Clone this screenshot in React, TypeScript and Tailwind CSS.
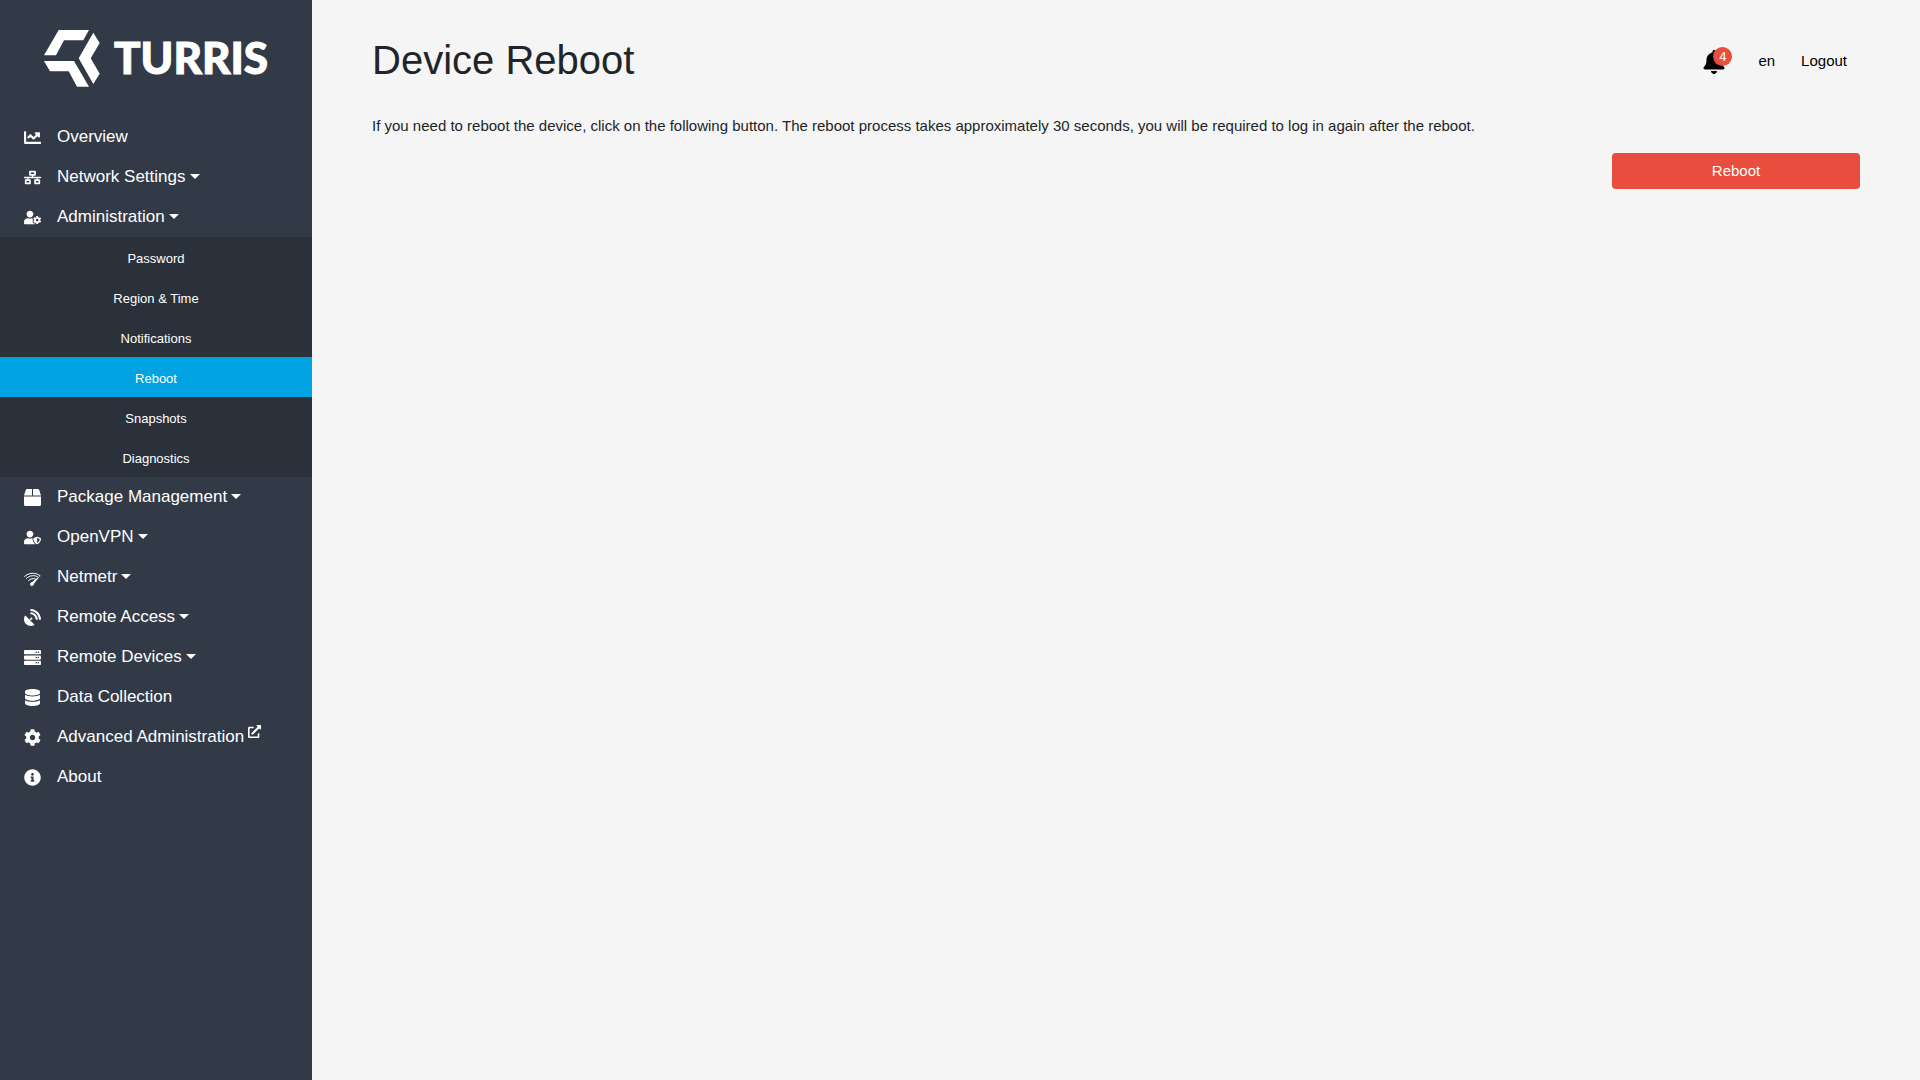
import type { ReactNode } from "react";
import {
  FaBell,
  FaBox,
  FaChartLine,
  FaCog,
  FaDatabase,
  FaExternalLinkAlt,
  FaInfoCircle,
  FaNetworkWired,
  FaSatelliteDish,
  FaServer,
  FaUserCog,
  FaUserShield,
} from "react-icons/fa";

function NetmetrIcon() {
  return (
    <svg viewBox="0 0 17 16" className="mt-[3px] h-4 w-full" fill="none" stroke="currentColor" strokeLinecap="round">
      <path d="M0.6 5.4C5 1.3 11.5 1.3 16 4.6" strokeWidth="1" />
      <path d="M2.4 7.4C6 4 10.5 4 13.6 5.8" strokeWidth="1" />
      <path d="M4.6 9.5C6.7 7.5 9.2 7.2 11.4 8" strokeWidth="1" />
      <path d="M16.4 4.4L6.8 12 9.2 13.8Z" fill="currentColor" stroke="none" />
      <circle cx="7.8" cy="13.2" r="1.8" fill="currentColor" stroke="none" />
    </svg>
  );
}

type Item = {
  label: string;
  icon: ReactNode;
  menu?: boolean;
  external?: boolean;
  children?: string[];
};

const items: Item[] = [
  { label: "Overview", icon: <FaChartLine size={17} /> },
  { label: "Network Settings", icon: <FaNetworkWired size={17} />, menu: true },
  {
    label: "Administration",
    icon: <FaUserCog size={17} />,
    menu: true,
    children: ["Password", "Region & Time", "Notifications", "Reboot", "Snapshots", "Diagnostics"],
  },
  { label: "Package Management", icon: <FaBox size={17} />, menu: true },
  { label: "OpenVPN", icon: <FaUserShield size={17} />, menu: true },
  { label: "Netmetr", icon: <NetmetrIcon />, menu: true },
  { label: "Remote Access", icon: <FaSatelliteDish size={17} />, menu: true },
  { label: "Remote Devices", icon: <FaServer size={17} />, menu: true },
  { label: "Data Collection", icon: <FaDatabase size={17} /> },
  { label: "Advanced Administration", icon: <FaCog size={17} />, external: true },
  { label: "About", icon: <FaInfoCircle size={17} /> },
];

function Caret() {
  return (
    <svg viewBox="0 0 10 5" className="mb-0.5 ml-1 h-[5px] w-[10px]" fill="currentColor">
      <path d="M0 0H10L5 5Z" />
    </svg>
  );
}

function Logo() {
  return (
    <a href="#" aria-label="Turris" className="flex h-[117px] items-start justify-center pt-[30px]">
      <svg viewBox="44 30 225 57" className="h-[57px] w-[225px]" fill="#fff">
        <path d="M58.7 30H89L83.3 40.3H64L56 55.3H44Z" />
        <path d="M44 61H74L89 86.7H77L68.7 71.3H50Z" />
        <path d="M93.3 32.7L99.7 43 90.7 58.3 99.7 73.7 93.3 84 78.7 58.3Z" />
        <text x="114" y="74" stroke="#fff" strokeWidth="1" className="font-[Lato,sans-serif] text-[44px] font-black">
          TURRIS
        </text>
      </svg>
    </a>
  );
}

function Sidebar() {
  return (
    <nav className="w-78 shrink-0 bg-[#333a47] text-white">
      <Logo />
      <ul>
        {items.map((item) => (
          <li key={item.label}>
            <a href="#" className="flex h-10 items-center pl-6 text-[17px]">
              <span className="mr-4 flex w-[17px] justify-center">{item.icon}</span>
              <span>{item.label}</span>
              {item.menu && <Caret />}
              {item.external && <FaExternalLinkAlt size={13} className="mb-3 ml-1" />}
            </a>
            {item.children && (
              <ul className="bg-[#2b313a]">
                {item.children.map((child) => (
                  <li key={child}>
                    <a
                      href="#"
                      className={
                        child === "Reboot"
                          ? "flex h-10 items-center justify-center bg-[#00a2e2] pt-1 text-[13px]"
                          : "flex h-10 items-center justify-center pt-1 text-[13px]"
                      }
                    >
                      {child}
                    </a>
                  </li>
                ))}
              </ul>
            )}
          </li>
        ))}
      </ul>
    </nav>
  );
}

export default function App() {
  return (
    <div className="flex min-h-screen bg-[#f5f5f5] font-['Liberation_Sans',Arial,sans-serif] text-[15px] text-[#212529]">
      <Sidebar />
      <main className="min-w-0 flex-1 px-15 pt-9">
        <header className="flex h-12 items-center justify-between">
          <h1 className="text-[40px] leading-12">Device Reboot</h1>
          <div className="flex items-center pt-0.5 pr-[13px] text-black">
            <button type="button" aria-label="Notifications" className="relative mt-0.5 mr-8">
              <FaBell size={24} />
              <span className="absolute -top-[3px] left-[11px] flex size-[19px] items-center justify-center rounded-full bg-[#e84d3d] text-[13px] text-white">
                4
              </span>
            </button>
            <button type="button" className="mr-[26px]">en</button>
            <a href="#">Logout</a>
          </div>
        </header>
        <p className="mt-[30px] leading-6">
          If you need to reboot the device, click on the following button. The reboot process takes approximately 30
          seconds, you will be required to log in again after the reboot.
        </p>
        <div className="mt-[15px] flex justify-end">
          <button type="button" className="h-9 w-1/6 rounded bg-[#e84d3d] text-white">
            Reboot
          </button>
        </div>
      </main>
    </div>
  );
}
